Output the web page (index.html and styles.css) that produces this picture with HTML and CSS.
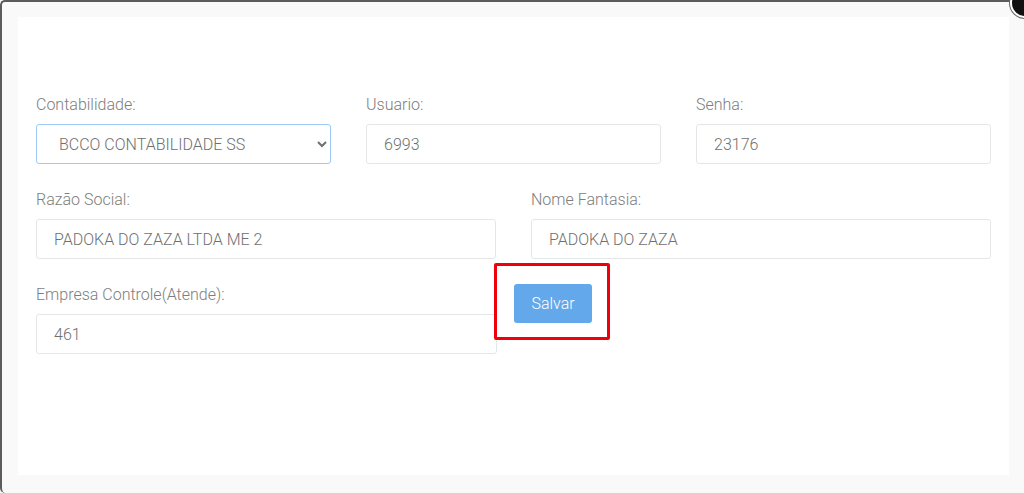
FILE: index.html
```html
<!DOCTYPE html>
<html lang="pt-BR">
<head>
  <meta charset="UTF-8" />
  <meta name="viewport" content="width=device-width, initial-scale=1" />
  <title>Editar Empresa</title>
  <link rel="stylesheet" href="styles.css">
</head>
<body>
  <div class="modal">
    <button class="close-btn" aria-label="Fechar">
      <svg viewBox="0 0 10 10" width="10" height="10"><path d="M2 2 L8 8 M8 2 L2 8" stroke="#fff" stroke-width="1.6" /></svg>
    </button>
    <div class="modal-body">
      <form class="form">
        <div class="row">
          <div class="field col-3">
            <label for="contabilidade">Contabilidade:</label>
            <select id="contabilidade" class="input select">
              <option>BCCO CONTABILIDADE SS</option>
            </select>
          </div>
          <div class="field col-3">
            <label for="usuario">Usuario:</label>
            <input id="usuario" class="input" type="text" value="6993" />
          </div>
          <div class="field col-3">
            <label for="senha">Senha:</label>
            <input id="senha" class="input" type="text" value="23176" />
          </div>
        </div>
        <div class="row">
          <div class="field col-2">
            <label for="razao">Razão Social:</label>
            <input id="razao" class="input" type="text" value="PADOKA DO ZAZA LTDA ME 2" />
          </div>
          <div class="field col-2">
            <label for="fantasia">Nome Fantasia:</label>
            <input id="fantasia" class="input" type="text" value="PADOKA DO ZAZA" />
          </div>
        </div>
        <div class="row">
          <div class="field col-2">
            <label for="controle">Empresa Controle(Atende):</label>
            <input id="controle" class="input" type="text" value="461" />
          </div>
          <div class="actions">
            <button type="button" class="btn-save">Salvar</button>
          </div>
        </div>
      </form>
    </div>
  </div>
</body>
</html>
```

FILE: styles.css
```css
* {
  box-sizing: border-box;
}
html, body {
  height: 100%;
}
body {
  margin: 0;
  background: #f9f9f9;
  font-family: Roboto, 'Liberation Sans', Arial, sans-serif;
  overflow: hidden;
}
.modal {
  position: relative;
  height: 100%;
  background: #f9f9f9;
  border-top: 2px solid #5c5c5c;
  border-left: 2px solid #5c5c5c;
  border-radius: 5px 0 0 5px;
  padding: 15px 15px 18px 16px;
}
.close-btn {
  position: absolute;
  top: -14px;
  right: -16px;
  width: 30px;
  height: 30px;
  border-radius: 50%;
  background: #111;
  border: 2px solid #fff;
  box-shadow: 0 0 0 1px #666;
  padding: 0;
}
.close-btn svg {
  display: none;
}
.modal-body {
  height: 100%;
  background: #fff;
  padding: 77px 18px 0 18px;
}
.row {
  display: flex;
  gap: 35px;
  margin-bottom: 25px;
}
.col-3 {
  width: 296px;
}
.col-2 {
  width: 461px;
}
label {
  display: block;
  font-size: 16px;
  font-weight: 300;
  line-height: 22px;
  color: #7d7d7d;
  margin-bottom: 8px;
}
.input {
  display: block;
  width: 100%;
  height: 40px;
  padding: 0 17px;
  border: 1px solid #e4e7ea;
  border-radius: 3px;
  background: #fff;
  font-family: inherit;
  font-size: 16px;
  font-weight: 300;
  color: #6f6f6f;
  outline: none;
}
.select {
  padding-left: 18px;
  border-color: #9ccaf4;
}
.actions {
  position: relative;
  margin-left: -18px;
  align-self: flex-start;
}
.actions::after {
  content: "";
  position: absolute;
  top: -21px;
  left: -20px;
  right: -18px;
  bottom: -17px;
  border: 3px solid #f0000a;
  border-radius: 2px;
}
.btn-save {
  display: block;
  width: 78px;
  height: 39px;
  border: none;
  border-radius: 3px;
  background: #62a8ea;
  color: #fff;
  font-family: inherit;
  font-size: 16px;
  font-weight: 300;
  cursor: pointer;
}
```
